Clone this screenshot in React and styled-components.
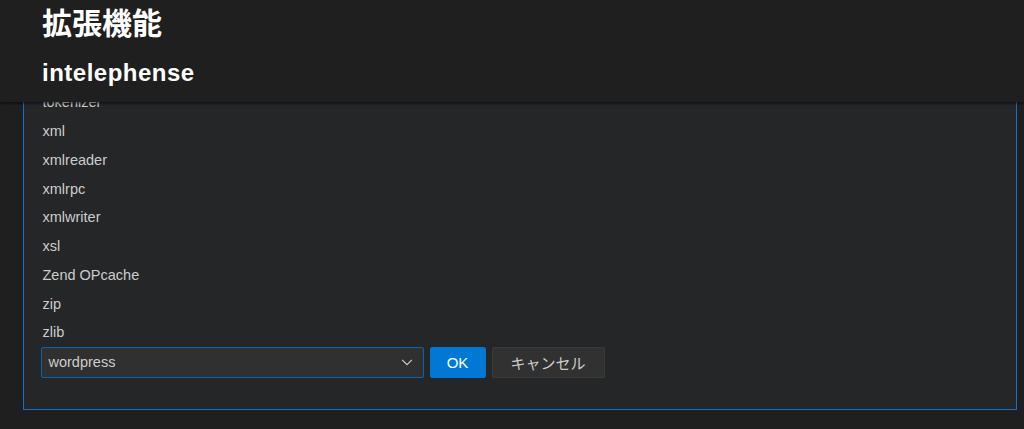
import React from "react";
import styled, { createGlobalStyle } from "styled-components";

const Global = createGlobalStyle`
  html, body { margin: 0; padding: 0; background: #1f1f1f; }
  body {
    font-family: "Liberation Sans", "Noto Sans CJK JP", sans-serif;
    color: #cccccc;
    -webkit-font-smoothing: antialiased;
  }
`;

const Page = styled.div`
  width: 1024px;
  height: 429px;
  overflow: hidden;
  display: flex;
  flex-direction: column;
  background: #1f1f1f;
`;

const Header = styled.header`
  position: relative;
  z-index: 2;
  height: 102px;
  flex: none;
  box-sizing: border-box;
  padding: 5px 0 0 42px;
  background: #1f1f1f;
  box-shadow: 0 2px 2px rgba(0, 0, 0, 0.45);
`;

const Title = styled.h1`
  margin: 0;
  font-family: "Liberation Sans", "Noto Sans CJK JP", sans-serif;
  font-size: 30px;
  line-height: 38px;
  font-weight: 700;
  color: #ffffff;
`;

const Subtitle = styled.h2`
  margin: 15px 0 0;
  font-family: "Liberation Sans", "Noto Sans CJK JP", sans-serif;
  font-size: 24px;
  line-height: 30px;
  font-weight: 700;
  color: #ffffff;
  letter-spacing: 0.5px;
`;

const Body = styled.main`
  position: relative;
  z-index: 1;
  margin-top: -24px;
  padding: 0 7px 0 23px;
`;

const Panel = styled.section`
  background: #252628;
  border: 1.5px solid #0f72cc;
  border-top: none;
  padding: 10px 17px 31px 16.5px;
`;

const List = styled.ul`
  list-style: none;
  margin: 0;
  padding: 0;
`;

const Row = styled.li`
  height: 28.75px;
  display: flex;
  align-items: center;
  padding-left: 2px;
  font-size: 14.5px;
  color: #cccccc;
`;

const Controls = styled.div`
  display: flex;
  align-items: stretch;
  gap: 6px;
  height: 31px;
`;

const SelectBox = styled.div`
  width: 383px;
  box-sizing: border-box;
  display: flex;
  align-items: center;
  justify-content: space-between;
  padding: 0 9px 0 7px;
  background: #303030;
  border: 1px solid #0e63ad;
  border-radius: 2px;
  font-size: 14.5px;
  color: #cccccc;
`;

const Button = styled.button`
  box-sizing: border-box;
  width: ${(p) => p.$w}px;
  border-radius: 2px;
  font-family: "Liberation Sans", "Noto Sans CJK JP", sans-serif;
  font-size: 15px;
  cursor: pointer;
  background: ${(p) => (p.$primary ? "#0078d4" : "#313131")};
  color: ${(p) => (p.$primary ? "#ffffff" : "#cccccc")};
  border: 1px solid ${(p) => (p.$primary ? "#0078d4" : "#3a3a3a")};
`;

const items = [
  "tokenizer",
  "xml",
  "xmlreader",
  "xmlrpc",
  "xmlwriter",
  "xsl",
  "Zend OPcache",
  "zip",
  "zlib",
];

export default function App() {
  return (
    <>
      <Global />
      <Page>
        <Header>
          <Title>拡張機能</Title>
          <Subtitle>intelephense</Subtitle>
        </Header>
        <Body>
          <Panel>
            <List>
              {items.map((t) => (
                <Row key={t}>{t}</Row>
              ))}
            </List>
            <Controls>
              <SelectBox>
                <span>wordpress</span>
                <svg width="14" height="14" viewBox="0 0 16 16" fill="none">
                  <path d="M2.5 5.5 L8 11 L13.5 5.5" stroke="#cccccc" strokeWidth="1.3" />
                </svg>
              </SelectBox>
              <Button $primary $w={56}>OK</Button>
              <Button $w={113}>キャンセル</Button>
            </Controls>
          </Panel>
        </Body>
      </Page>
    </>
  );
}
